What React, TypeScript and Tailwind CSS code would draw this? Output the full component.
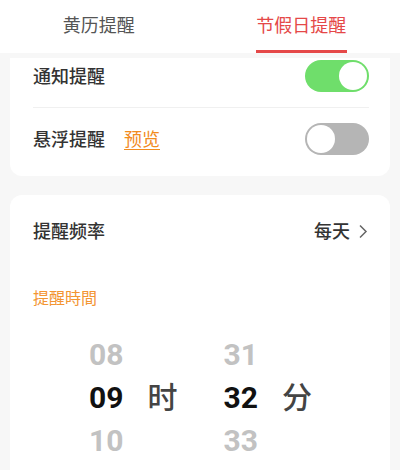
import React from 'react';

const FONT = "font-['Roboto','Noto_Sans_CJK_SC',sans-serif]";

function Toggle({ on }: { on: boolean }) {
  return (
    <div
      className={`w-[64px] h-[32px] rounded-full p-[2px] flex ${on ? 'bg-[#6fde6b] justify-end' : 'bg-[#b5b5b5] justify-start'}`}>
      <div className="w-[28px] h-[28px] rounded-full bg-white" />
    </div>
  );
}

function Picker() {
  const hours = ['08', '09', '10'];
  const mins = ['31', '32', '33'];
  return (
    <div className="flex justify-center items-center">
      <div className="flex flex-col">
        {hours.map((h, i) => (
          <div key={h}
            className={`h-[43px] leading-[43px] text-[30px] font-bold ${i === 1 ? 'text-[#111]' : 'text-[#c2c2c2]'}`}>
            {h}
          </div>
        ))}
      </div>
      <div className="ml-[24px] text-[30px] leading-[43px] font-medium text-[#444]">时</div>
      <div className="ml-[46px] flex flex-col">
        {mins.map((m, i) => (
          <div key={m}
            className={`h-[43px] leading-[43px] text-[30px] font-bold ${i === 1 ? 'text-[#111]' : 'text-[#c2c2c2]'}`}>
            {m}
          </div>
        ))}
      </div>
      <div className="ml-[24px] text-[30px] leading-[43px] font-medium text-[#444]">分</div>
    </div>
  );
}

export default function App() {
  return (
    <div className={`w-[400px] h-[470px] overflow-hidden bg-[#f7f7f7] ${FONT}`}>
      {/* Tabs */}
      <div className="h-[53px] bg-white flex">
        <div className="flex-1 flex flex-col items-center">
          <div className="h-[50px] flex items-center text-[18px] text-[#555]">黄历提醒</div>
        </div>
        <div className="flex-1 flex flex-col items-center pl-[5px]">
          <div className="h-[50px] flex items-center text-[18px] text-[#e54848]">节假日提醒</div>
          <div className="w-[91px] h-[3px] bg-[#e54848]" />
        </div>
      </div>

      <div className="px-[10px] pt-[5px] flex flex-col gap-[19px]">
        {/* Switches card */}
        <div className="bg-white rounded-b-[12px] pl-[23px] pr-[21px] pb-[6px]">
          <div className="flex items-center justify-between pt-[2px] pb-[15px] border-b border-[#f0f0f0]">
            <span className="text-[18px] font-medium text-[#333]">通知提醒</span>
            <Toggle on />
          </div>
          <div className="h-[62px] flex items-center justify-between">
            <div className="flex items-center gap-[19px]">
              <span className="text-[18px] font-medium text-[#333]">悬浮提醒</span>
              <span className="text-[18px] text-[#f28c1f] underline underline-offset-[3px]">预览</span>
            </div>
            <Toggle on={false} />
          </div>
        </div>

        {/* Time card */}
        <div className="bg-white rounded-[12px] pl-[23px] pr-[22px] h-[300px]">
          <div className="h-[72px] flex items-center justify-between">
            <span className="text-[18px] font-medium text-[#333]">提醒频率</span>
            <div className="flex items-center gap-[8px]">
              <span className="text-[18px] font-medium text-[#333]">每天</span>
              <svg width="10" height="15" viewBox="0 0 10 15" fill="none">
                <path d="M2 1.5 L8 7.5 L2 13.5" stroke="#666" strokeWidth="1.5" />
              </svg>
            </div>
          </div>
          <div className="mt-[21px] text-[16px] leading-[22px] text-[#f39532]">提醒時間</div>
          <div className="mt-[23px]">
            <Picker />
          </div>
        </div>
      </div>
    </div>
  );
}
